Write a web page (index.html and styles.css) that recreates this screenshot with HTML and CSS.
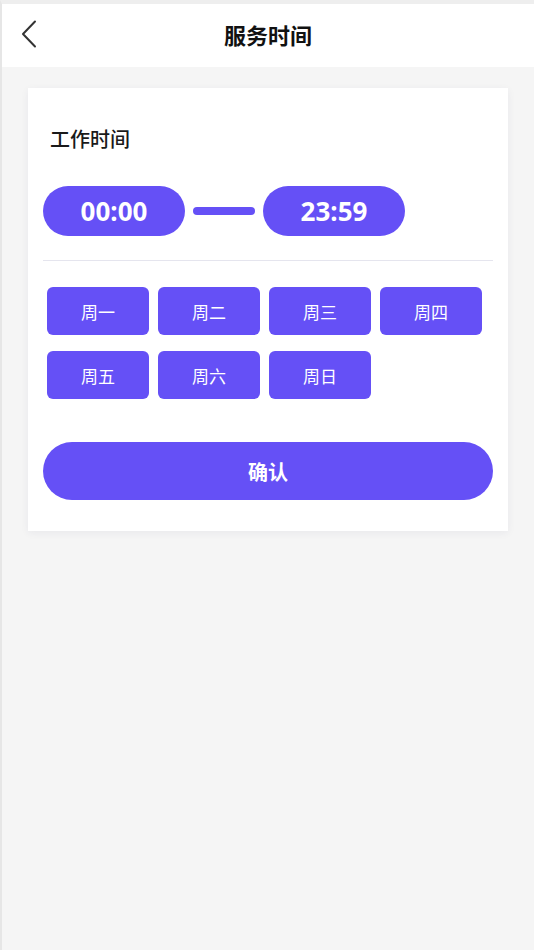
FILE: index.html
```html
<!DOCTYPE html>
<html lang="zh-CN">
<head>
  <meta charset="UTF-8">
  <title>服务时间</title>
  <link rel="stylesheet" href="styles.css">
</head>
<body>

  <div class="page">
    <header class="topbar">
      <a class="back" href="#">
        <svg width="16" height="28" viewBox="0 0 16 28">
          <path d="M14 1.5 L2 14 L14 26.5" fill="none" stroke="#333" stroke-width="2" stroke-linecap="round" stroke-linejoin="round"/>
        </svg>
      </a>
      <h1>服务时间</h1>
    </header>

    <section class="card">
      <h2>工作时间</h2>

      <div class="time-range">
        <div class="time-pill">00:00</div>
        <span class="dash"></span>
        <div class="time-pill">23:59</div>
      </div>

      <div class="divider"></div>

      <div class="days">
        <button class="day">周一</button>
        <button class="day">周二</button>
        <button class="day">周三</button>
        <button class="day">周四</button>
        <button class="day">周五</button>
        <button class="day">周六</button>
        <button class="day">周日</button>
      </div>

      <button class="confirm">确认</button>
    </section>
  </div>

</body>
</html>
```

FILE: styles.css
```css
body {
  margin: 0;
  font-family: "Noto Sans", "Noto Sans CJK SC", sans-serif;
  background: #f5f5f5;
}

.page {
  min-height: 946px;
  border-top: 4px solid #eeeeee;
  border-left: 2px solid #e6e6e6;
  background: #f5f5f5;
}

.topbar {
  position: relative;
  height: 63px;
  box-sizing: border-box;
  padding-bottom: 3px;
  background: #fff;
  display: flex;
  align-items: center;
  justify-content: center;
}

.topbar h1 {
  margin: 0;
  font-size: 22px;
  font-weight: bold;
  color: #111;
}

.back {
  position: absolute;
  left: 19px;
  top: 16px;
  display: block;
}

.card {
  margin: 21px 26px 0;
  background: #fff;
  box-shadow: 0 2px 8px rgba(40, 40, 80, 0.06);
  padding: 37px 15px 31px;
}

.card h2 {
  margin: 0 0 31px 7px;
  font-size: 20px;
  font-weight: 500;
  color: #1a1a1a;
  line-height: 30px;
}

.time-range {
  display: flex;
  align-items: center;
  gap: 8px;
}

.time-pill {
  width: 142px;
  height: 50px;
  border-radius: 25px;
  background: #6550f6;
  color: #fff;
  font-size: 26px;
  font-weight: bold;
  display: flex;
  align-items: center;
  justify-content: center;
}

.dash {
  width: 62px;
  height: 8px;
  border-radius: 4px;
  background: #6550f6;
}

.divider {
  height: 1px;
  background: #e5e5ee;
  margin: 24px 0 26px;
}

.days {
  display: grid;
  grid-template-columns: repeat(4, 102px);
  gap: 16px 9px;
  padding-left: 4px;
}

.day {
  height: 48px;
  border: none;
  border-radius: 6px;
  background: #6550f6;
  color: #fff;
  font-family: inherit;
  font-size: 17px;
  padding: 0;
}

.confirm {
  display: block;
  width: 100%;
  height: 58px;
  margin-top: 43px;
  border: none;
  border-radius: 29px;
  background: #6550f6;
  color: #fff;
  font-family: inherit;
  font-size: 20px;
  font-weight: bold;
}
```
